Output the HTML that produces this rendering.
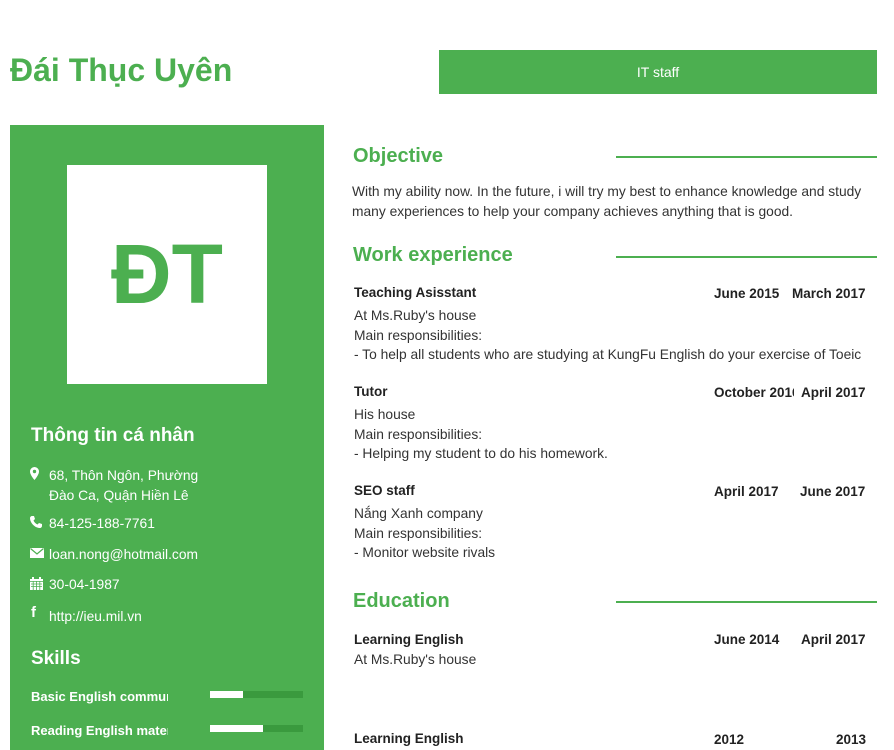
<!DOCTYPE html>
<html><head><meta charset="utf-8"><style>
*{margin:0;padding:0;box-sizing:border-box}
body{width:894px;height:750px;background:#fff;position:relative;overflow:hidden;font-family:"Liberation Sans",Arial,sans-serif;color:#333}
.a{position:absolute;white-space:nowrap}
.g{color:#4caf50}
h2{position:absolute;left:353px;font-size:20px;font-weight:bold;color:#4caf50}
.ln{position:absolute;left:616px;width:261px;height:2px;background:#4caf50}
.t{font-size:13.8px;color:#333}
.b{font-weight:bold;font-size:13.5px;color:#222}
.w{color:#fff;font-size:13.8px}
.bar{position:absolute;left:210px;width:93px;height:7px;background:#3a9a3e}
.bar i{display:block;height:7px;background:#fff}
</style></head><body>
<div class="a g" style="left:10px;top:52px;font-size:32px;font-weight:bold">Đái Thục Uyên</div>
<div class="a" style="left:439px;top:50px;width:438px;height:44px;background:#4caf50;color:#fff;font-size:14px;text-align:center;line-height:44px">IT staff</div>

<div class="a" style="left:10px;top:125px;width:314px;height:625px;background:#4caf50"></div>
<div class="a" style="left:67px;top:165px;width:200px;height:219px;background:#fff;color:#4caf50;font-size:84px;font-weight:bold;text-align:center;line-height:219px">ĐT</div>

<div class="a" style="left:31px;top:425px;color:#fff;font-size:19px;font-weight:bold">Thông tin cá nhân</div>
<svg class="a" style="left:30px;top:467px" width="9" height="13" viewBox="0 0 9 13"><path d="M4.5 0A4.5 4.5 0 0 0 0 4.5C0 8 4.5 13 4.5 13S9 8 9 4.5A4.5 4.5 0 0 0 4.5 0Z" fill="#fff"/><circle cx="4.5" cy="4.5" r="1.7" fill="#4caf50"/></svg>
<div class="a w" style="left:49px;top:466px;line-height:20px">68, Thôn Ngôn, Phường<br>Đào Ca, Quận Hiền Lê</div>
<svg class="a" style="left:30px;top:516px" width="12" height="12" viewBox="0 0 12 12"><path d="M2 0L4 0L5 3L3.5 4.5C4.5 6.5 5.5 7.5 7.5 8.5L9 7L12 8L12 10C12 11 11 12 10 12C5 12 0 7 0 2C0 1 1 0 2 0Z" fill="#fff"/></svg>
<div class="a w" style="left:49px;top:516px">84-125-188-7761</div>
<svg class="a" style="left:30px;top:548px" width="14" height="10" viewBox="0 0 14 10"><rect width="14" height="10" fill="#fff"/><path d="M0.5 0.5L7 6L13.5 0.5" stroke="#4caf50" fill="none" stroke-width="1.2"/></svg>
<div class="a w" style="left:49px;top:547px">loan.nong@hotmail.com</div>
<svg class="a" style="left:30px;top:577px" width="13" height="13" viewBox="0 0 13 13"><rect y="2" width="13" height="11" fill="#fff"/><rect x="2" y="0" width="2" height="3" fill="#fff"/><rect x="9" y="0" width="2" height="3" fill="#fff"/><path d="M0 4.5H13M1 7H12M1 9.5H12M3.2 4v9M6.5 4v9M9.8 4v9" stroke="#4caf50" stroke-width="0.8"/></svg>
<div class="a w" style="left:49px;top:577px">30-04-1987</div>
<div class="a" style="left:31px;top:604px;color:#fff;font-weight:bold;font-size:15px">f</div>
<div class="a w" style="left:49px;top:609px">http://ieu.mil.vn</div>

<div class="a" style="left:31px;top:648px;color:#fff;font-size:19px;font-weight:bold">Skills</div>
<div class="a" style="left:31px;top:689px;color:#fff;font-size:13px;font-weight:bold;width:137px;overflow:hidden">Basic English communication</div>
<div class="bar" style="top:691px"><i style="width:33px"></i></div>
<div class="a" style="left:31px;top:723px;color:#fff;font-size:13px;font-weight:bold;width:137px;overflow:hidden">Reading English material</div>
<div class="bar" style="top:725px"><i style="width:53px"></i></div>

<h2 style="top:145px">Objective</h2><div class="ln" style="top:156px"></div>
<div class="a t" style="left:352px;top:182px;line-height:20px">With my ability now. In the future, i will try my best to enhance knowledge and study<br>many experiences to help your company achieves anything that is good.</div>

<h2 style="top:244px">Work experience</h2><div class="ln" style="top:256px"></div>

<div class="a b" style="left:354px;top:285px">Teaching Asisstant</div>
<div class="a b" style="left:714px;top:286px">June 2015</div><div class="a b" style="left:792px;top:286px">March 2017</div>
<div class="a t" style="left:354px;top:306px;line-height:19.5px">At Ms.Ruby's house<br>Main responsibilities:<br>- To help all students who are studying at KungFu English do your exercise of Toeic</div>

<div class="a b" style="left:354px;top:384px">Tutor</div>
<div class="a b" style="left:714px;top:385px;width:80px;overflow:hidden">October 2016</div><div class="a b" style="left:801px;top:385px">April 2017</div>
<div class="a t" style="left:354px;top:405px;line-height:19.5px">His house<br>Main responsibilities:<br>- Helping my student to do his homework.</div>

<div class="a b" style="left:354px;top:483px">SEO staff</div>
<div class="a b" style="left:714px;top:484px">April 2017</div><div class="a b" style="left:800px;top:484px">June 2017</div>
<div class="a t" style="left:354px;top:504px;line-height:19.5px">Nắng Xanh company<br>Main responsibilities:<br>- Monitor website rivals</div>

<h2 style="top:590px">Education</h2><div class="ln" style="top:601px"></div>
<div class="a b" style="left:354px;top:632px">Learning English</div>
<div class="a b" style="left:714px;top:632px">June 2014</div><div class="a b" style="left:801px;top:632px">April 2017</div>
<div class="a t" style="left:354px;top:652px">At Ms.Ruby's house</div>
<div class="a b" style="left:354px;top:731px">Learning English</div>
<div class="a b" style="left:714px;top:732px">2012</div><div class="a b" style="left:836px;top:732px">2013</div>
</body></html>
